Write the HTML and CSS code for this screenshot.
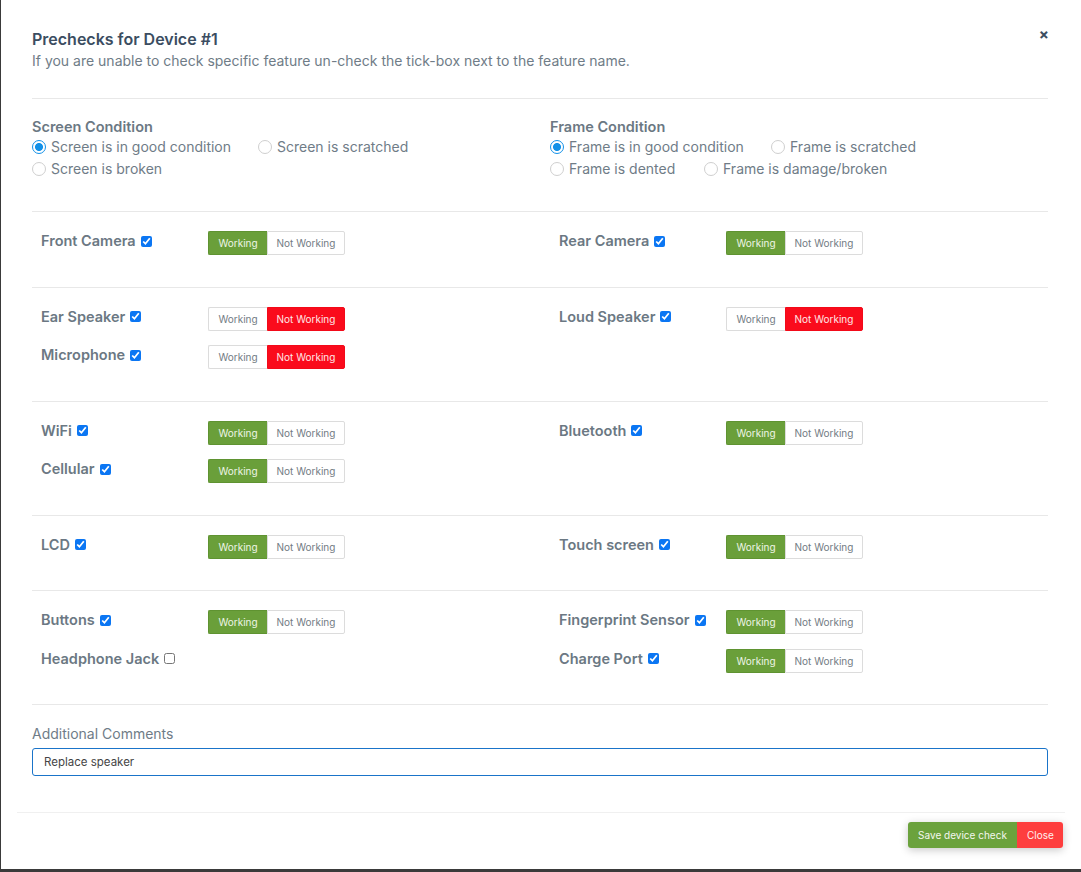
FILE: index.html
```html
<!DOCTYPE html>
<html>
<head>
<meta charset="utf-8">
<link rel="stylesheet" href="styles.css">
</head>
<body>
<div class="modal">
  <div class="modal-header">
    <div>
      <h2 class="title">Prechecks for Device #1</h2>
      <p class="subtitle">If you are unable to check specific feature un-check the tick-box next to the feature name.</p>
    </div>
    <button class="close-x" type="button">×</button>
  </div>

  <div class="modal-body">
    <div class="section conditions">
      <div class="col">
        <div class="cond-title">Screen Condition</div>
        <div class="radios">
          <label class="radio w-left1"><input type="radio" name="screen" checked> Screen is in good condition</label>
          <label class="radio"><input type="radio" name="screen"> Screen is scratched</label>
          <label class="radio"><input type="radio" name="screen"> Screen is broken</label>
        </div>
      </div>
      <div class="col">
        <div class="cond-title">Frame Condition</div>
        <div class="radios">
          <label class="radio w-right1"><input type="radio" name="frame" checked> Frame is in good condition</label>
          <label class="radio"><input type="radio" name="frame"> Frame is scratched</label>
          <label class="radio w-right2"><input type="radio" name="frame"> Frame is dented</label>
          <label class="radio"><input type="radio" name="frame"> Frame is damage/broken</label>
        </div>
      </div>
    </div>

    <div class="section features">
      <div class="col">
        <div class="feature"><div class="f-label">Front Camera <input type="checkbox" checked></div>
          <div class="btn-group"><span class="seg ok">Working</span><span class="seg">Not Working</span></div></div>
      </div>
      <div class="col">
        <div class="feature"><div class="f-label">Rear Camera <input type="checkbox" checked></div>
          <div class="btn-group"><span class="seg ok">Working</span><span class="seg">Not Working</span></div></div>
      </div>
    </div>

    <div class="section features">
      <div class="col">
        <div class="feature"><div class="f-label">Ear Speaker <input type="checkbox" checked></div>
          <div class="btn-group"><span class="seg">Working</span><span class="seg bad">Not Working</span></div></div>
        <div class="feature"><div class="f-label">Microphone <input type="checkbox" checked></div>
          <div class="btn-group"><span class="seg">Working</span><span class="seg bad">Not Working</span></div></div>
      </div>
      <div class="col">
        <div class="feature"><div class="f-label">Loud Speaker <input type="checkbox" checked></div>
          <div class="btn-group"><span class="seg">Working</span><span class="seg bad">Not Working</span></div></div>
      </div>
    </div>

    <div class="section features">
      <div class="col">
        <div class="feature"><div class="f-label">WiFi <input type="checkbox" checked></div>
          <div class="btn-group"><span class="seg ok">Working</span><span class="seg">Not Working</span></div></div>
        <div class="feature"><div class="f-label">Cellular <input type="checkbox" checked></div>
          <div class="btn-group"><span class="seg ok">Working</span><span class="seg">Not Working</span></div></div>
      </div>
      <div class="col">
        <div class="feature"><div class="f-label">Bluetooth <input type="checkbox" checked></div>
          <div class="btn-group"><span class="seg ok">Working</span><span class="seg">Not Working</span></div></div>
      </div>
    </div>

    <div class="section features">
      <div class="col">
        <div class="feature"><div class="f-label">LCD <input type="checkbox" checked></div>
          <div class="btn-group"><span class="seg ok">Working</span><span class="seg">Not Working</span></div></div>
      </div>
      <div class="col">
        <div class="feature"><div class="f-label">Touch screen <input type="checkbox" checked></div>
          <div class="btn-group"><span class="seg ok">Working</span><span class="seg">Not Working</span></div></div>
      </div>
    </div>

    <div class="section features">
      <div class="col">
        <div class="feature"><div class="f-label">Buttons <input type="checkbox" checked></div>
          <div class="btn-group"><span class="seg ok">Working</span><span class="seg">Not Working</span></div></div>
        <div class="feature"><div class="f-label">Headphone Jack <input type="checkbox"></div></div>
      </div>
      <div class="col">
        <div class="feature"><div class="f-label">Fingerprint Sensor <input type="checkbox" checked></div>
          <div class="btn-group"><span class="seg ok">Working</span><span class="seg">Not Working</span></div></div>
        <div class="feature"><div class="f-label">Charge Port <input type="checkbox" checked></div>
          <div class="btn-group"><span class="seg ok">Working</span><span class="seg">Not Working</span></div></div>
      </div>
    </div>

    <div class="comments">
      <label class="comments-label">Additional Comments</label>
      <input class="comments-input" type="text" value="Replace speaker">
    </div>
  </div>

  <div class="modal-footer">
    <div class="footer-btns">
      <button class="btn save" type="button">Save device check</button><button class="btn close" type="button">Close</button>
    </div>
  </div>
</div>
</body>
</html>
```

FILE: styles.css
```css
* { box-sizing: border-box; }
html, body { margin: 0; padding: 0; }
body {
  background: #3a3a3a;
  width: 1081px;
  height: 872px;
  overflow: hidden;
  font-family: Inter, "Liberation Sans", sans-serif;
}
.modal {
  margin-left: 1px;
  width: 1080px;
  height: 869px;
  background: #fff;
  display: flex;
  flex-direction: column;
}
.modal-header {
  display: flex;
  justify-content: space-between;
  align-items: flex-start;
  padding: 28px 32px 0 31px;
}
.title {
  margin: 0;
  font-size: 16px;
  font-weight: 600;
  color: #3b4d61;
  line-height: 22px;
}
.subtitle {
  margin: 2px 0 0;
  font-size: 14px;
  color: #6f7c87;
  line-height: 18px;
}
.close-x {
  border: 0;
  background: none;
  padding: 0;
  margin-top: 0;
  font-family: inherit;
  font-size: 15px;
  font-weight: 700;
  color: #3b4d61;
  line-height: 14px;
}
.modal-body {
  padding: 0 33px 0 31px;
  margin-top: 28px;
  flex: 1;
}
.section {
  border-top: 1px solid #e8e8e8;
  display: grid;
  grid-template-columns: 518px 1fr;
}
.conditions {
  padding: 19px 0 31px;
}
.cond-title {
  font-size: 14.5px;
  font-weight: 600;
  color: #6b7883;
  line-height: 18px;
}
.radios {
  display: flex;
  flex-wrap: wrap;
  width: 420px;
}
.radio {
  display: flex;
  align-items: center;
  font-size: 14px;
  color: #6f7c87;
  line-height: 22px;
  margin-right: 27px;
  white-space: nowrap;
}
.w-left1 { width: 226px; margin-right: 0; }
.w-right1 { width: 221px; margin-right: 0; }
.w-right2 { width: 154px; margin-right: 0; }
.radio input {
  appearance: none;
  -webkit-appearance: none;
  width: 14px;
  height: 14px;
  margin: 0 5px 0 0;
  border-radius: 50%;
  border: 1px solid #cfcfcf;
  background: #fff;
}
.radio input:checked {
  border: 1.5px solid #1391e8;
  background: radial-gradient(circle, #1391e8 0 3.6px, #fff 4.4px);
}
.features {
  padding: 19px 0 17px;
}
.feature {
  display: flex;
  align-items: flex-start;
  margin-bottom: 14.5px;
  min-height: 24px;
}
.f-label {
  width: 176px;
  padding-left: 9px;
  padding-top: 1px;
  font-size: 14.5px;
  font-weight: 600;
  color: #6b7883;
  line-height: 18px;
  display: flex;
  align-items: center;
  white-space: nowrap;
}
.f-label input {
  margin: 0 0 0 5px;
  width: 11px;
  height: 11px;
  accent-color: #0b76f3;
}
.btn-group {
  display: flex;
  height: 24px;
}
.seg {
  display: flex;
  align-items: center;
  justify-content: center;
  font-size: 10px;
  color: #737c84;
  border: 1px solid #dcdcdc;
  background: #fff;
  height: 24px;
}
.seg:first-child {
  width: 59px;
  border-radius: 2px 0 0 2px;
  border-right: 0;
}
.seg:last-child {
  width: 78px;
  border-radius: 0 2px 2px 0;
}
.seg.ok {
  background: #6a9f3a;
  border-color: #5f9331;
  color: #eef5e6;
}
.seg.bad {
  background: #fa0b1c;
  border-color: #f20a19;
  color: #ffe6e6;
}
.comments {
  border-top: 1px solid #e8e8e8;
  padding-top: 20px;
}
.comments-label {
  display: block;
  font-size: 14px;
  color: #6f7c87;
  line-height: 18px;
  margin-bottom: 5px;
}
.comments-input {
  display: block;
  width: 100%;
  height: 28px;
  border: 1px solid #1a74c9;
  border-radius: 3px;
  padding: 0 11px;
  font-family: inherit;
  font-size: 11.5px;
  color: #454545;
  outline: none;
}
.modal-footer {
  margin: 0 16px;
  border-top: 1px solid #f0f0f0;
  padding: 9px 2px 21px 0;
  display: flex;
  justify-content: flex-end;
}
.footer-btns {
  display: flex;
  box-shadow: 0 2px 8px rgba(0,0,0,0.22);
  border-radius: 3px;
}
.btn {
  border: 0;
  height: 26px;
  font-family: inherit;
  font-size: 10px;
  color: #f3f7ee;
  padding: 0 10px;
}
.btn.save {
  background: #6ba23d;
  border-radius: 3px 0 0 3px;
  width: 109px;
}
.btn.close {
  background: #fe3e3e;
  color: #fff0f0;
  border-radius: 0 3px 3px 0;
  width: 46px;
}
```
